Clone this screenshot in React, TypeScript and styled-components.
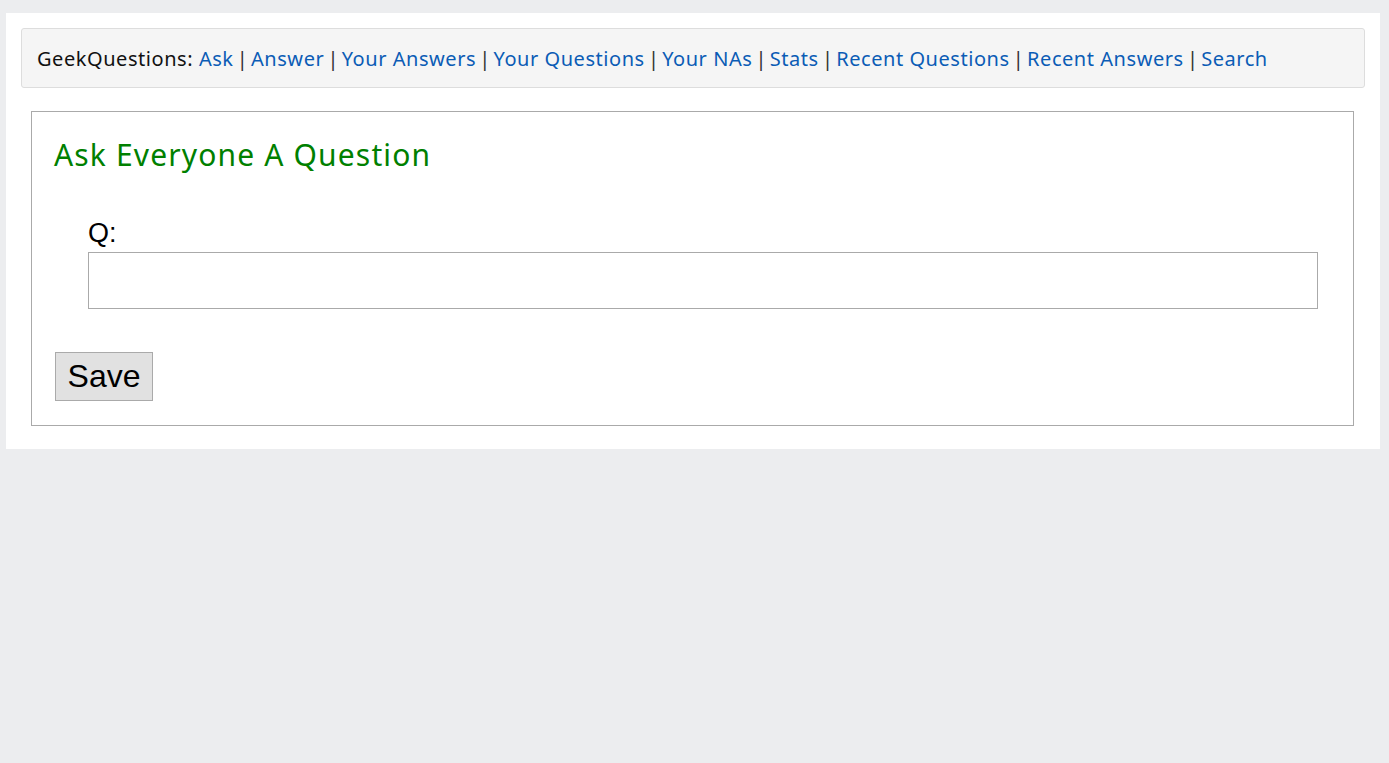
import React from "react";
import styled, { createGlobalStyle } from "styled-components";

const Global = createGlobalStyle`
  html, body { margin: 0; padding: 0; background: #ecedef; }
  body { font-family: "Open Sans", "Liberation Sans", sans-serif; }
`;

const Page = styled.div`
  padding: 13px 9px 0 6px;
`;

const Container = styled.div`
  background: #ffffff;
  padding: 15px 15px 23px 15px;
`;

const Nav = styled.nav`
  height: 60px;
  box-sizing: border-box;
  display: flex;
  align-items: center;
  padding: 0 15px;
  background: #f5f5f5;
  border: 1px solid #dddddd;
  border-radius: 3px;
  font-family: "Noto Sans", "Open Sans", sans-serif;
  font-size: 20px;
  letter-spacing: 0.55px;
  color: #111;
  white-space: pre;
`;

const NavLink = styled.a`
  color: #0b5cb5;
  text-decoration: none;
`;

const Sep = styled.span`
  color: #333;
  letter-spacing: 0;
  word-spacing: -2px;
`;

const FormBox = styled.div`
  margin: 23px 11px 0 10px;
  border: 1px solid #aaaaaa;
  padding: 23px 22px 24px 22px;
`;

const Heading = styled.h2`
  margin: 0;
  font-family: "Noto Sans", "Open Sans", sans-serif;
  font-weight: 400;
  font-size: 30px;
  line-height: 40px;
  letter-spacing: 1.15px;
  color: #008000;
`;

const Field = styled.div`
  margin: 42px 13px 0 34px;
  display: flex;
  flex-direction: column;
`;

const Label = styled.label`
  font-family: "Liberation Sans", Arial, sans-serif;
  font-size: 27px;
  line-height: 32px;
  color: #000;
  margin-bottom: 3px;
`;

const Input = styled.input`
  height: 57px;
  box-sizing: border-box;
  border: 1px solid #aaaaaa;
  outline: none;
  font-size: 24px;
  padding: 0 8px;
`;

const SaveButton = styled.button`
  margin: 43px 0 0 1px;
  width: 98px;
  height: 49px;
  box-sizing: border-box;
  background: #e1e1e1;
  border: 1px solid #aaaaaa;
  font-family: "Liberation Sans", Arial, sans-serif;
  font-size: 32px;
  color: #000;
  padding: 0;
  cursor: pointer;
`;

const links = [
  "Ask",
  "Answer",
  "Your Answers",
  "Your Questions",
  "Your NAs",
  "Stats",
  "Recent Questions",
  "Recent Answers",
  "Search",
];

export default function App() {
  return (
    <>
      <Global />
      <Page>
        <Container>
          <Nav>
            <span>GeekQuestions: </span>
            {links.map((l, i) => (
              <React.Fragment key={l}>
                {i > 0 && <Sep> | </Sep>}
                <NavLink href="#">{l}</NavLink>
              </React.Fragment>
            ))}
          </Nav>
          <FormBox>
            <Heading>Ask Everyone A Question</Heading>
            <Field>
              <Label>Q:</Label>
              <Input type="text" />
            </Field>
            <SaveButton>Save</SaveButton>
          </FormBox>
        </Container>
      </Page>
    </>
  );
}
